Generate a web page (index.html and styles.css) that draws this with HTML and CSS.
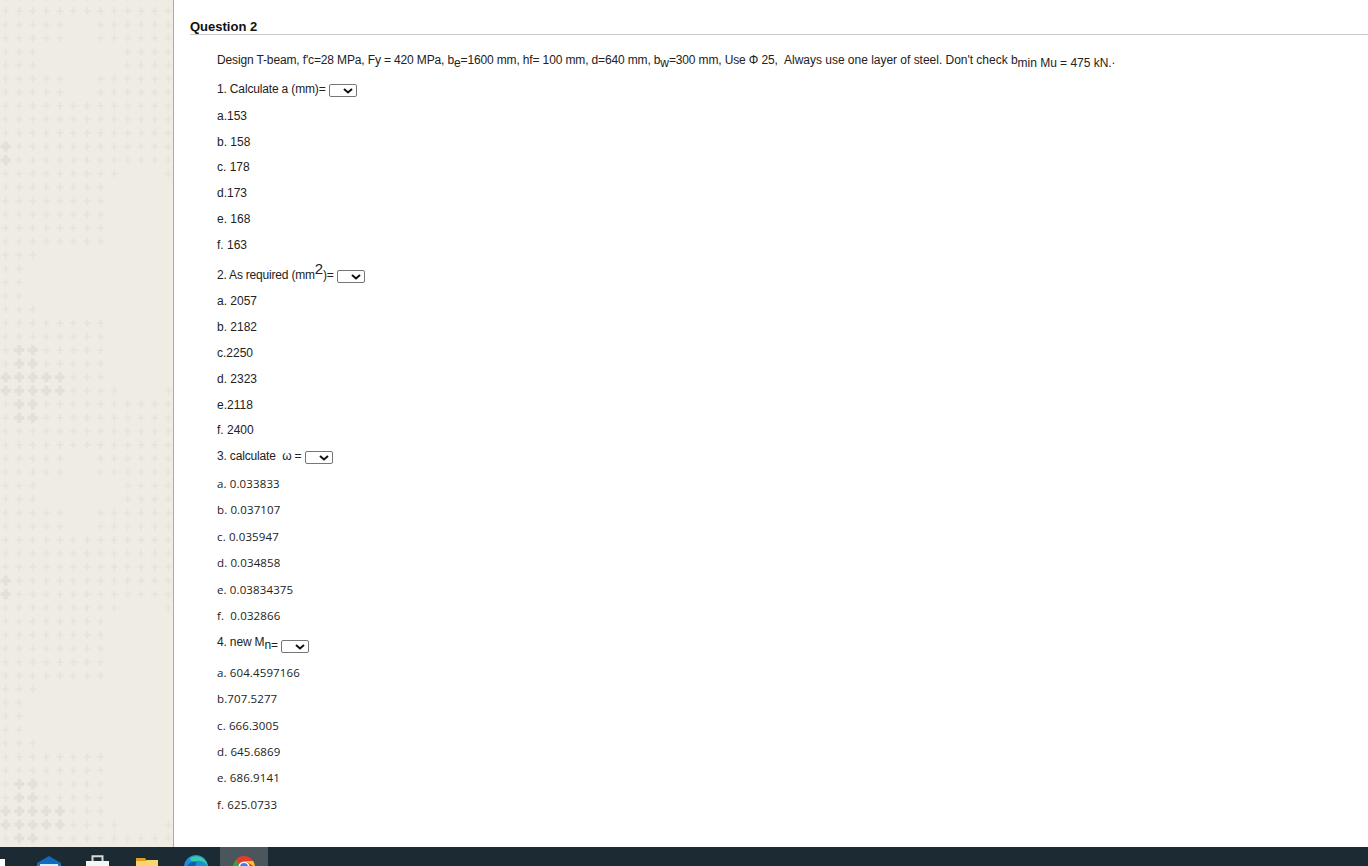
FILE: index.html
```html
<!DOCTYPE html>
<html lang="en">
<head>
<meta charset="utf-8">
<title>Question 2</title>
<link rel="stylesheet" href="styles.css">
</head>
<body>
<div class="page">
  <aside class="side">
    <svg class="side-art" width="173" height="847" aria-hidden="true">
      <defs>
        <pattern id="plus" width="1" height="1" patternUnits="userSpaceOnUse">
          <path d="M.44.24h.12v.2h.2v.12h-.2v.2h-.12v-.2h-.2v-.12h.2z" fill="#e5e3da"/>
        </pattern>
        <pattern id="dot" width="1" height="1" patternUnits="userSpaceOnUse">
          <path d="M.36.13h.28v.23h.23v.28h-.23v.23h-.28v-.23h-.23v-.28h.23z" fill="#e2e0d7"/>
        </pattern>
        <g id="tile">
          <g fill="url(#plus)">
            <rect x="0" y="-1" width="13" height="2"/>
            <rect x="0" y="1" width="5" height="2"/><rect x="7" y="1" width="6" height="2"/>
            <rect x="0" y="3" width="3" height="2"/><rect x="9" y="3" width="4" height="2"/>
            <rect x="0" y="5" width="5" height="2"/><rect x="7" y="5" width="6" height="2"/>
            <rect x="0" y="7" width="13" height="5"/>
            <rect x="0" y="12" width="9" height="1"/><rect x="12" y="12" width="1" height="1"/>
            <rect x="0" y="13" width="8" height="5"/>
            <rect x="0" y="18" width="3" height="1"/>
            <rect x="0" y="19" width="2" height="3"/>
            <rect x="0" y="22" width="3" height="1"/>
            <rect x="0" y="23" width="8" height="5"/>
            <rect x="0" y="28" width="9" height="1"/><rect x="12" y="28" width="1" height="1"/>
            <rect x="0" y="29" width="13" height="2"/>
          </g>
          <g fill="url(#dot)">
            <rect x="0" y="10" width="1" height="2"/>
            <rect x="1" y="25" width="2" height="2"/>
            <rect x="0" y="27" width="5" height="2"/>
            <rect x="1" y="29" width="2" height="2"/>
          </g>
        </g>
      </defs>
      <g transform="translate(-1.07 4.22) scale(13.55 13.5625)">
        <use href="#tile"/>
        <use href="#tile" y="32"/>
        <use href="#tile" y="64"/>
      </g>
    </svg>
  </aside>
  <main class="main">
    <h2 class="qhead">Question 2</h2>
    <div class="qbody">
      <p class="stem">Design T-beam, f'c=28 MPa, Fy = 420 MPa, b<sub>e</sub>=1600 mm, hf= 100 mm, d=640 mm, b<sub>w</sub>=300 mm, Use Φ 25,&nbsp; <span class="stem-tail">Always use one layer of steel. Don't check b<sub>min Mu = 475 kN.</sub>.</span></p>
      <p class="q q1"><span>1. Calculate a (mm)= </span><select class="sel"><option></option></select></p>
      <p class="o">a.153</p><p class="o">b. 158</p><p class="o">c. 178</p><p class="o">d.173</p><p class="o">e. 168</p><p class="o">f. 163</p>
      <p class="q q2"><span>2. As required (mm<sup>2</sup>)= </span><select class="sel"><option></option></select></p>
      <p class="o">a. 2057</p><p class="o">b. 2182</p><p class="o">c.2250</p><p class="o">d. 2323</p><p class="o">e.2118</p><p class="o">f. 2400</p>
      <p class="q q3"><span>3. calculate&nbsp; ω = </span><select class="sel"><option></option></select></p>
      <p class="o v">a. 0.033833</p><p class="o v">b. 0.037107</p><p class="o v">c. 0.035947</p><p class="o v">d. 0.034858</p><p class="o v">e. 0.03834375</p><p class="o v">f.&nbsp; 0.032866</p>
      <p class="q q4"><span>4. new M<sub>n=</sub> </span><select class="sel sel-low"><option></option></select></p>
      <p class="o v">a. 604.4597166</p><p class="o v">b.707.5277</p><p class="o v">c. 666.3005</p><p class="o v">d. 645.6869</p><p class="o v">e. 686.9141</p><p class="o v">f. 625.0733</p>
    </div>
  </main>
</div>
<footer class="taskbar">
  <span class="win"></span>
  <span class="tb"><svg class="i-mail" width="24" height="12" viewBox="0 0 24 12"><path d="M12 0 24 7v5H0V7z" fill="#0f6cbd"/><path d="M0 9l12 0 12 0v3H0z" fill="#1b86d6"/><path d="M3 8h18v4H3z" fill="#d8ecfa"/></svg></span>
  <span class="tb"><svg class="i-bag" width="23" height="12" viewBox="0 0 23 12"><path d="M6.500 7V1.200h10V7" fill="none" stroke="#d9d9d9" stroke-width="2"/><path d="M0 6h23v6H0z" fill="#f5f5f5"/></svg></span>
  <span class="tb"><svg class="i-folder" width="22" height="9" viewBox="0 0 22 9"><path d="M0 2h22v7H0z" fill="#f8d66d"/><path d="M0 0h9l2 3H0z" fill="#d9a021"/></svg></span>
  <span class="tb"><svg class="i-edge" width="24" height="12" viewBox="0 0 24 12"><circle cx="12" cy="12" r="12" fill="#1b8fdc"/><path d="M6 3a12 12 0 0 1 18 9c-2-5-7-7-12-6-3 .5-5 1-6-3z" fill="#3ccf9e"/><path d="M3 12c1-4 5-6 9-5 1 3-2 5-3 5z" fill="#0f5fb0"/></svg></span>
  <span class="tb tb-active"><svg class="i-chrome" width="22" height="11" viewBox="0 0 22 11"><circle cx="11" cy="11" r="11" fill="#e33b2e"/><path d="M0 11a11 11 0 0 1 3-7l5 7z" fill="#2fa24b"/><path d="M22 11a11 11 0 0 0-2-6h-8z" fill="#f7c52b"/><circle cx="11" cy="11" r="5.500" fill="#fff"/><circle cx="11" cy="11" r="4" fill="#3d7fe6"/></svg></span>
</footer>
</body>
</html>
```
FILE: styles.css
```css
html, body { margin: 0; height: 866px; overflow: hidden; background: #fff; }
body { font-family: "Liberation Sans", Arial, sans-serif; color: #222; }
.page { display: flex; height: 847px; }
.side { width: 173px; flex: none; background-color: #efece4; border-right: 1px solid #aaa; overflow: hidden; }
.side-art { display: block; }
.main { flex: 1; padding: 18px 0 0 16px; min-width: 0; }
.qhead { margin: 0; height: 16px; font-size: 13px; line-height: 18px; font-weight: bold; color: #111; border-bottom: 1px solid #ccc; }
.qbody { padding: 17px 0 0 27px; font-size: 12px; }
.qbody p { margin: 0; line-height: 16px; }
.stem { height: 23px; white-space: nowrap; letter-spacing: -0.14px; }
.stem-tail { letter-spacing: -0.02px; }
.q { display: flex; align-items: center; white-space: pre; letter-spacing: -0.16px; }
.q1 { height: 28px; }
.qbody .q2 { height: 26.200px; margin-top: 4.500px; letter-spacing: -0.2px; }
.qbody .q3 { height: 26px; margin-bottom: 1.500px; }
.qbody .q4 { height: 26px; margin-bottom: 4.500px; }
.o { height: 25.800px; display: flex; align-items: center; white-space: pre; }
.v { height: 26.400px; font-family: "Open Sans", sans-serif; font-size: 11.500px; letter-spacing: 0.12px; }
sub { font-size: 12px; vertical-align: -3px; line-height: 0; }
sup { font-size: 15px; vertical-align: 5px; line-height: 0; }
.sel {
  appearance: none; -webkit-appearance: none;
  width: 28px; height: 13px; margin: 2px 0 0; padding: 0;
  border: 1px solid #767676; border-radius: 2px; box-sizing: border-box; font-size: 10px;
  background: #fff url("data:image/svg+xml,%3Csvg xmlns='http://www.w3.org/2000/svg' width='10' height='6'%3E%3Cpath d='M1 1l4 3.500L9 1' fill='none' stroke='%23111' stroke-width='2'/%3E%3C/svg%3E") no-repeat 13px 3px;
}
.sel-low { margin-top: 8px; }
.taskbar { height: 19px; background: #1b2a33; display: flex; align-items: flex-start; overflow: hidden; }
.win { width: 5px; height: 7px; margin: 12px 19px 0 0; background: #fff; }
.tb { width: 49px; height: 19px; display: flex; justify-content: center; align-items: flex-start; }
.tb-active { width: 48px; background: #4a555c; }
.i-mail { margin-top: 9px; }
.i-bag { margin-top: 8px; }
.i-folder { margin-top: 11px; }
.i-edge { margin-top: 8px; }
.i-chrome { margin-top: 9px; }
```
